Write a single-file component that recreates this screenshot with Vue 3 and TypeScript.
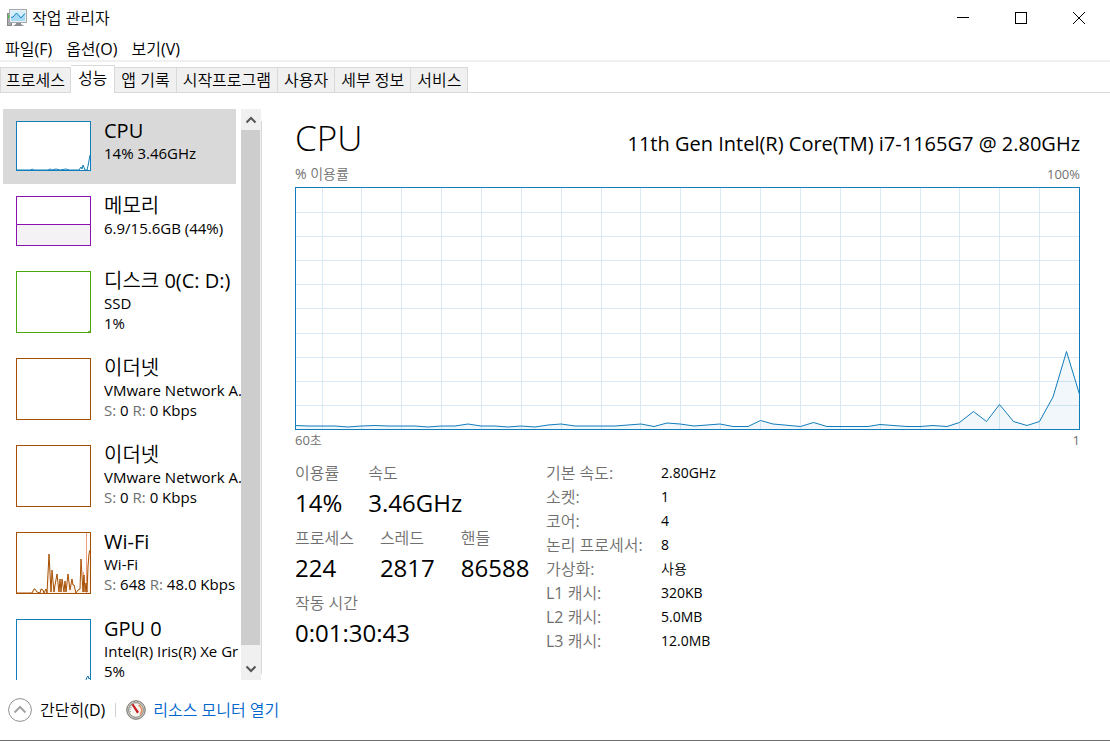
<script setup lang="ts">
import { computed, ref } from 'vue'

interface Resource {
  id: string
  name: string
  tone: string
  lines: string[]
  network?: { send: string; receive: string }
  line?: string
  area?: string
}

const menus = ['파일(F)', '옵션(O)', '보기(V)']
const tabs = ['프로세스', '성능', '앱 기록', '시작프로그램', '사용자', '세부 정보', '서비스']
const activeTab = ref('성능')
const activeResource = ref('cpu')

const wifiLine =
  '1,61 16,61 18,57 19,57 21,60 24,61 25,57 27,58 28,61 30,57 31,61 33,22 35,60 36,38 38,60 39,53 41,42 43,60 44,47 45,60 46,47 48,60 49,49 50,60 52,42 54,58 56,47 57,53 58,53 60,61 62,58 64,57 65,27 67,60 68,43 69,60 70,51 71,60 72,34 73,22 74,18'

const resources: Resource[] = [
  {
    id: 'cpu',
    name: 'CPU',
    tone: 'blue',
    lines: ['14% 3.46GHz'],
    line: '1,49 15,49 16,48 18,49 32,49 34,48 36,49 40,48 44,49 50,48 53,49 63,49 65,46 66,48 67,44 69,49 71,49 72,45 74,34',
  },
  { id: 'memory', name: '메모리', tone: 'purple', lines: ['6.9/15.6GB (44%)'], line: '1,28.5 75,28.5', area: '1,28 75,28 75,50 1,50' },
  { id: 'disk', name: '디스크 0(C: D:)', tone: 'green', lines: ['SSD', '1%'], line: '72,61 74,60' },
  { id: 'eth1', name: '이더넷', tone: 'orange', lines: ['VMware Network A.'], network: { send: '0', receive: '0 Kbps' } },
  { id: 'eth2', name: '이더넷', tone: 'orange', lines: ['VMware Network A.'], network: { send: '0', receive: '0 Kbps' } },
  {
    id: 'wifi',
    name: 'Wi-Fi',
    tone: 'orange',
    lines: ['Wi-Fi'],
    network: { send: '648', receive: '48.0 Kbps' },
    line: wifiLine,
    area: wifiLine + ' 74,61',
  },
  { id: 'gpu', name: 'GPU 0', tone: 'blue', lines: ['Intel(R) Iris(R) Xe Gr', '5%'], line: '70,61 71,58 72,57 73,60 74,59' },
]

const samples: [number, number][] = [
  [0, 238.5], [13, 239], [40, 239], [53, 240], [66, 239], [80, 238.5], [93, 239], [120, 239], [133, 240],
  [146, 239], [160, 239], [173, 237], [186, 239], [200, 239], [213, 240], [226, 239], [240, 240], [253, 238],
  [266, 237], [280, 239], [320, 239], [346, 237], [359, 239.5], [372, 236], [385, 237], [399, 239], [425, 237],
  [438, 239.5], [453, 239.5], [465.5, 233.5], [478, 237], [505.5, 239.5], [518.5, 235.5], [532, 239.5],
  [573, 239.5], [585, 237.5], [612, 239.5], [625, 239.5], [638, 238.5], [652, 239.5], [664.5, 235.5],
  [678.5, 224.5], [691.5, 234.5], [704.5, 217.5], [718.5, 234.5], [732, 238.5], [744.5, 234.5], [758, 210],
  [771.5, 164.5], [785, 209],
]
const chartLine = computed(() => samples.map(([x, y]) => `${x},${y}`).join(' '))
const chartArea = computed(() => `0,243 ${chartLine.value} 785,243`)
const columns = [27, 66, 106, 146, 186, 226, 266, 306, 345, 385, 425, 465, 505, 545, 585, 625, 664, 704, 744]
const rows = [25, 49, 73, 97, 121, 146, 170, 194, 218]

const stats = [
  [{ label: '이용률', value: '14%' }, { label: '속도', value: '3.46GHz' }],
  [{ label: '프로세스', value: '224' }, { label: '스레드', value: '2817' }, { label: '핸들', value: '86588' }],
  [{ label: '작동 시간', value: '0:01:30:43' }],
]

const details = [
  ['기본 속도:', '2.80GHz'],
  ['소켓:', '1'],
  ['코어:', '4'],
  ['논리 프로세서:', '8'],
  ['가상화:', '사용'],
  ['L1 캐시:', '320KB'],
  ['L2 캐시:', '5.0MB'],
  ['L3 캐시:', '12.0MB'],
]
</script>

<template>
  <div class="window">
    <header class="titlebar">
      <svg class="app-icon" width="22" height="20" viewBox="0 0 22 20" aria-hidden="true">
        <rect x="0.5" y="5.5" width="4" height="12" fill="#a9adb0" stroke="#84888b" />
        <rect x="1" y="7" width="2" height="3" fill="#2fd02f" />
        <path d="M9 14h5v2l3 2H6l3-2z" fill="#8c9094" />
        <rect x="2.5" y="1.5" width="17" height="13" fill="#eceeef" stroke="#a4a9ad" />
        <rect x="4" y="3" width="14" height="10" fill="#d3effc" />
        <path d="M4 10l3-2 3-3 4 4 4-4v8H4z" fill="#a6daf4" />
        <path d="M4 9.5L6 9l3.500-4 4.500 5 4-4.500" fill="none" stroke="#1784bd" />
      </svg>
      <h1 class="window-title">작업 관리자</h1>
      <div class="window-buttons">
        <button type="button" aria-label="최소화">
          <svg width="12" height="12" viewBox="0 0 12 12"><path d="M0 5.5h12" /></svg>
        </button>
        <button type="button" aria-label="최대화">
          <svg width="12" height="12" viewBox="0 0 12 12"><rect x="0.5" y="0.5" width="11" height="11" /></svg>
        </button>
        <button type="button" aria-label="닫기">
          <svg width="12" height="12" viewBox="0 0 12 12"><path d="M0 0l12 12M12 0L0 12" /></svg>
        </button>
      </div>
    </header>

    <nav class="menubar">
      <button v-for="menu in menus" :key="menu" type="button">{{ menu }}</button>
    </nav>

    <div class="tabs" role="tablist">
      <button
        v-for="tab in tabs"
        :key="tab"
        type="button"
        role="tab"
        :aria-selected="tab === activeTab"
        :class="{ active: tab === activeTab }"
        @click="activeTab = tab"
      >
        {{ tab }}
      </button>
    </div>

    <div class="content">
      <aside class="sidebar">
        <div class="resource-list">
          <button
            v-for="item in resources"
            :key="item.id"
            type="button"
            class="resource"
            :class="[item.tone, { selected: item.id === activeResource, tall: item.lines.length > 1 || item.network }]"
            @click="activeResource = item.id"
          >
            <svg class="thumb" viewBox="0 0 75 62" preserveAspectRatio="xMinYMin slice" aria-hidden="true">
              <polygon v-if="item.area" class="thumb-area" :points="item.area" />
              <path v-if="item.id === 'wifi'" class="thumb-marker" d="M70.5 1v60M67.5 40v20" />
              <polyline v-if="item.line" class="thumb-line" :points="item.line" />
            </svg>
            <span class="resource-text">
              <span class="resource-name">{{ item.name }}</span>
              <span v-for="line in item.lines" :key="line" class="resource-line">{{ line }}</span>
              <span v-if="item.network" class="resource-line">
                <span class="muted">S:</span> {{ item.network.send }} <span class="muted">R:</span> {{ item.network.receive }}
              </span>
            </span>
          </button>
        </div>
        <div class="scrollbar">
          <button type="button" aria-label="위로 스크롤">
            <svg width="12" height="8" viewBox="0 0 12 8"><path d="M1.5 6.5L6 2l4.5 4.5" /></svg>
          </button>
          <div class="scroll-thumb"></div>
          <button type="button" class="scroll-down" aria-label="아래로 스크롤">
            <svg width="12" height="8" viewBox="0 0 12 8"><path d="M1.5 1.5L6 6l4.5-4.5" /></svg>
          </button>
        </div>
        <div class="divider"></div>
      </aside>

      <main class="detail">
        <div class="heading">
          <h2>CPU</h2>
          <p>11th Gen Intel(R) Core(TM) i7-1165G7 @ 2.80GHz</p>
        </div>
        <div class="axis axis-top"><span class="axis-name">% 이용률</span><span>100%</span></div>
        <div class="chart">
          <svg viewBox="0 0 785 243" preserveAspectRatio="none" role="img" aria-label="CPU 이용률">
            <path v-for="x in columns" :key="'c' + x" class="grid" :d="`M${x}.5 0V243`" />
            <path v-for="y in rows" :key="'r' + y" class="grid" :d="`M0 ${y}.5H785`" />
            <polygon class="area" :points="chartArea" />
            <polyline class="plot" :points="chartLine" />
            <rect class="frame" x="0.5" y="0.5" width="784" height="242" />
          </svg>
        </div>
        <div class="axis axis-bottom"><span>60초</span><span>1</span></div>
        <div class="figures">
          <div class="stats">
            <dl v-for="(group, i) in stats" :key="i" class="stat-row">
              <div v-for="stat in group" :key="stat.label">
                <dt>{{ stat.label }}</dt>
                <dd>{{ stat.value }}</dd>
              </div>
            </dl>
          </div>
          <dl class="specs">
            <template v-for="[label, value] in details" :key="label">
              <dt>{{ label }}</dt>
              <dd>{{ value }}</dd>
            </template>
          </dl>
        </div>
      </main>
    </div>

    <footer class="footer">
      <button type="button" class="fewer">
        <svg width="24" height="24" viewBox="0 0 24 24" aria-hidden="true">
          <circle cx="12" cy="12" r="11.4" fill="#fff" stroke="#8f8f8f" />
          <path d="M6.5 14.5L12 9l5.5 5.5" fill="none" stroke="#a3a3a3" stroke-width="2" />
        </svg>
        <span>간단히(D)</span>
      </button>
      <span class="separator"></span>
      <a href="#resource-monitor" class="monitor-link">
        <svg width="20" height="20" viewBox="0 0 20 20" aria-hidden="true">
          <circle cx="10" cy="10" r="9.3" fill="#c9c7c2" stroke="#77736d" />
          <circle cx="10" cy="10" r="7.3" fill="#f8f6f1" stroke="#8c8881" />
          <path d="M4.5 12A6 6 0 0 1 8 4.500" fill="none" stroke="#aaa" stroke-width="1.5" stroke-dasharray="1 1" />
          <path d="M12.5 5a6 6 0 0 1 1.500 9.500" fill="none" stroke="#e08a55" stroke-width="1.5" />
          <path d="M5.5 4.500L7.500 4l5.500 8-2 1.500z" fill="#c81d22" />
        </svg>
        <span>리소스 모니터 열기</span>
      </a>
    </footer>
  </div>
</template>

<style>
body {
  margin: 0;
  background: #fff;
}
</style>

<style scoped>
.window {
  display: flex;
  flex-direction: column;
  box-sizing: border-box;
  height: 100vh;
  min-height: 640px;
  border-bottom: 1px solid #6e6e6e;
  background: #fff;
  color: #000;
  font-family: 'Open Sans', 'Noto Sans CJK KR DemiLight', 'Noto Sans CJK KR Light', 'Noto Sans CJK KR', sans-serif;
  font-size: 16px;
  line-height: 20px;
}

button {
  padding: 0;
  border: 0;
  background: none;
  color: inherit;
  font: inherit;
  text-align: left;
}

h1,
h2,
p,
dl,
dd {
  margin: 0;
  font-weight: 400;
}

.titlebar {
  display: flex;
  align-items: center;
  height: 36px;
  padding-left: 7px;
}

.window-title {
  margin-left: 3px;
  font-size: 16px;
}

.window-buttons {
  display: flex;
  align-self: stretch;
  margin-left: auto;
  padding-right: 2px;
}

.window-buttons button {
  display: flex;
  align-items: center;
  justify-content: center;
  width: 58px;
}

.window-buttons svg {
  fill: none;
  stroke: #000;
}

.menubar {
  display: flex;
  gap: 14px;
  height: 24px;
  padding-left: 5px;
  border-bottom: 2px solid #f0f0f0;
}

.menubar button {
  height: 26px;
}

.tabs {
  display: flex;
  align-items: flex-end;
  height: 31px;
  box-shadow: inset 0 -1px #d9d9d9;
}

.tabs button {
  box-sizing: border-box;
  height: 26px;
  padding: 0 6px;
  border: 1px solid #d9d9d9;
  border-left-width: 0;
  background: #f0f0f0;
}

.tabs button:first-child {
  padding: 0 5px;
  border-left-width: 1px;
}

.tabs button.active {
  height: 28px;
  padding: 0 7px 3px;
  border-bottom: 0;
  background: #fff;
}

.content {
  display: flex;
  flex: 1;
  min-height: 0;
  padding-top: 16px;
}

.sidebar {
  display: flex;
  width: 262px;
  flex: none;
  box-sizing: border-box;
  padding-left: 3px;
}

.resource-list {
  width: 238px;
  overflow: hidden;
}

.resource {
  display: flex;
  width: 233px;
  height: 75px;
}

.resource.tall {
  height: 87px;
}

.resource.selected {
  background: #d9d9d9;
}

.blue {
  --tone: #117dbb;
  --tint: #f1f6fa;
}

.purple {
  --tone: #8b12ae;
  --tint: #f4f2f4;
}

.green {
  --tone: #4da60c;
  --tint: #eff7e9;
}

.orange {
  --tone: #a74f01;
  --tint: #fcf3eb;
}

.thumb {
  flex: none;
  box-sizing: border-box;
  width: 75px;
  height: 50px;
  margin: 12px 13px 0;
  background: #fff;
  outline: 1px solid var(--tone);
  outline-offset: -1px;
}

.tall .thumb {
  height: 62px;
}

.thumb-area {
  fill: var(--tint);
}

.thumb-line {
  fill: none;
  stroke: var(--tone);
}

.thumb-marker {
  stroke: #ec9c7c;
}

.resource-text {
  padding-top: 9px;
  white-space: nowrap;
}

.resource-name,
.resource-line {
  display: block;
}

.resource-name {
  font-size: 20px;
  line-height: 25px;
}

.resource-line {
  font-size: 15px;
}

.muted {
  color: #707070;
}

.scrollbar {
  display: flex;
  flex-direction: column;
  width: 20px;
  background: #f0f0f0;
}

.scrollbar button {
  display: flex;
  align-items: center;
  justify-content: center;
  width: 19px;
  height: 21px;
}

.scrollbar svg {
  fill: none;
  stroke: #555;
  stroke-width: 2;
}

.scroll-thumb {
  flex: 1;
  width: 19px;
  background: #cdcdcd;
}

.scrollbar .scroll-down {
  margin-top: 12px;
  height: 23px;
}

.divider {
  width: 1px;
  margin: 12px 0 6px;
  background: #d9d9d9;
}

.detail {
  display: flex;
  flex: 1;
  flex-direction: column;
  min-width: 0;
  padding: 0 30px 0 33px;
}

.heading {
  display: flex;
  align-items: baseline;
  justify-content: space-between;
  height: 55px;
}

.heading h2 {
  font-size: 35px;
  line-height: 58px;
  font-weight: 300;
}

.heading p {
  font-size: 20px;
}

.axis {
  display: flex;
  justify-content: space-between;
  height: 20px;
  color: #707070;
  font-size: 13px;
}

.axis-top {
  height: 23px;
}

.axis-name {
  font-size: 14px;
}

.chart {
  flex: 1;
  min-height: 120px;
}

.chart svg {
  display: block;
  width: 100%;
  height: 100%;
}

.grid {
  fill: none;
  stroke: #d9eaf4;
}

.area {
  fill: #117dbb;
  fill-opacity: 0.06;
}

.plot {
  fill: none;
  stroke: #117dbb;
}

.frame {
  fill: none;
  stroke: #117dbb;
}

.figures {
  display: grid;
  grid-template-columns: 251px 1fr;
  height: 219px;
  margin-top: 11px;
}

.stat-row {
  display: flex;
  gap: 26px;
  height: 65px;
}

.stats dt {
  color: #707070;
  line-height: 24px;
}

.stats dd {
  font-size: 24px;
  line-height: 36px;
}

.specs {
  display: grid;
  grid-template-columns: 115px 1fr;
  align-content: start;
  line-height: 24px;
}

.specs dt {
  color: #707070;
}

.specs dd {
  font-size: 14px;
}

.footer {
  display: flex;
  align-items: center;
  height: 60px;
  padding-left: 8px;
}

.fewer,
.monitor-link {
  display: flex;
  align-items: center;
  gap: 8px;
}

.separator {
  width: 1px;
  height: 14px;
  margin: 0 10px;
  background: #d0d0d0;
}

.monitor-link {
  gap: 7px;
  color: #0066cc;
  text-decoration: none;
}
</style>
